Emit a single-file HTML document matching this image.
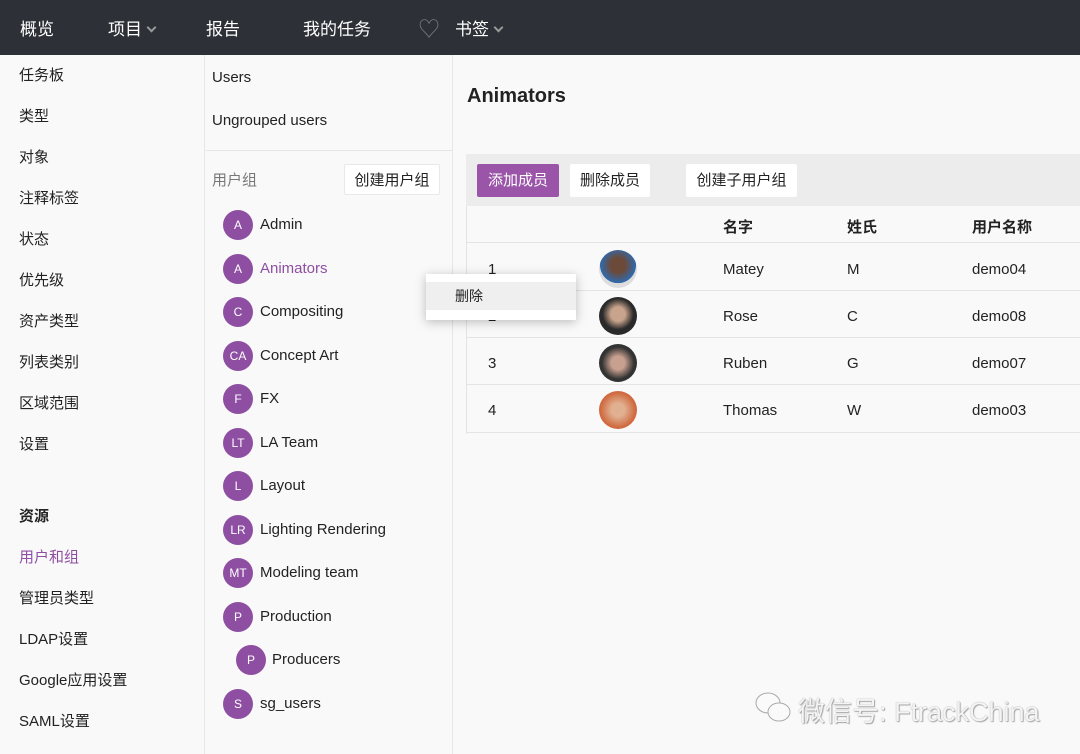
<!DOCTYPE html>
<html><head><meta charset="utf-8"><style>
*{margin:0;padding:0;box-sizing:border-box}
body{width:1080px;height:754px;overflow:hidden;background:#f9f9f9;font-family:"Liberation Sans","Noto Sans CJK SC",sans-serif;color:#222;position:relative}
.top{position:absolute;left:0;top:0;width:1080px;height:55px;background:#2d3036;color:#fff;font-size:17px}
.top span{position:absolute;top:15px}
.chev{display:inline-block;width:7px;height:7px;border-right:2px solid #999;border-bottom:2px solid #999;transform:rotate(45deg);margin-left:6px;position:relative;top:-4px}
.a{position:absolute;white-space:nowrap;font-size:15px}
.side{position:absolute;left:0;top:55px;width:205px;height:699px;border-right:1px solid #e6e6e6;background:#f9f9f9}
.mid{position:absolute;left:205px;top:55px;width:248px;height:699px;border-right:1px solid #e6e6e6;background:#f9f9f9}
.av{position:absolute;width:30px;height:30px;border-radius:50%;background:#8e4fa3;color:#fff;font-size:12px;text-align:center;line-height:30px}
.btn{position:absolute;height:33px;line-height:33px;text-align:center;font-size:15px;background:#fff;border-radius:2px}
.row{position:absolute;left:467px;width:613px;border-bottom:1px solid #e4e4e4}
.ph{position:absolute;width:38px;height:38px;border-radius:50%}
.g{margin-top:2px}
</style></head><body>
<div class="top">
<span style="left:20px">概览</span><span style="left:108px">项目<i class="chev"></i></span>
<span style="left:206px">报告</span><span style="left:303px">我的任务</span>
<span style="left:418px;color:#777;font-size:22px;top:12px">♡</span><span style="left:455px">书签<i class="chev"></i></span>
</div>
<div class="side"></div>
<div class="mid"></div>
<div style="position:absolute;left:206px;top:150px;width:246px;height:1px;background:#e6e6e6"></div>
<div class="a" style="left:19px;top:64px">任务板</div>
<div class="a" style="left:19px;top:105px">类型</div>
<div class="a" style="left:19px;top:146px">对象</div>
<div class="a" style="left:19px;top:187px">注释标签</div>
<div class="a" style="left:19px;top:228px">状态</div>
<div class="a" style="left:19px;top:269px">优先级</div>
<div class="a" style="left:19px;top:310px">资产类型</div>
<div class="a" style="left:19px;top:351px">列表类别</div>
<div class="a" style="left:19px;top:392px">区域范围</div>
<div class="a" style="left:19px;top:433px">设置</div>
<div class="a" style="left:19px;top:505px;font-weight:bold">资源</div>
<div class="a" style="left:19px;top:546px;color:#8e4fa3">用户和组</div>
<div class="a" style="left:19px;top:587px">管理员类型</div>
<div class="a" style="left:19px;top:628px">LDAP设置</div>
<div class="a" style="left:19px;top:669px">Google应用设置</div>
<div class="a" style="left:19px;top:710px">SAML设置</div>

<div class="a" style="left:212px;top:69px">Users</div>
<div class="a" style="left:212px;top:112px">Ungrouped users</div>
<div class="a" style="left:212px;top:169px;color:#777">用户组</div>
<div class="btn" style="left:344px;top:164px;width:96px;height:31px;line-height:31px;border:1px solid #e8e8e8">创建用户组</div>

<div class="av" style="left:223px;top:210px">A</div><div class="a" style="left:260px;top:216px">Admin</div>
<div class="av" style="left:223px;top:254px">A</div><div class="a" style="left:260px;top:260px;color:#8e4fa3">Animators</div>
<div class="av" style="left:223px;top:297px">C</div><div class="a" style="left:260px;top:303px">Compositing</div>
<div class="av" style="left:223px;top:341px">CA</div><div class="a" style="left:260px;top:347px">Concept Art</div>
<div class="av" style="left:223px;top:384px">F</div><div class="a" style="left:260px;top:390px">FX</div>
<div class="av" style="left:223px;top:428px">LT</div><div class="a" style="left:260px;top:434px">LA Team</div>
<div class="av" style="left:223px;top:471px">L</div><div class="a" style="left:260px;top:477px">Layout</div>
<div class="av" style="left:223px;top:515px">LR</div><div class="a" style="left:260px;top:521px">Lighting Rendering</div>
<div class="av" style="left:223px;top:558px">MT</div><div class="a" style="left:260px;top:564px">Modeling team</div>
<div class="av" style="left:223px;top:602px">P</div><div class="a" style="left:260px;top:608px">Production</div>
<div class="av" style="left:236px;top:645px">P</div><div class="a" style="left:272px;top:651px">Producers</div>
<div class="av" style="left:223px;top:689px">S</div><div class="a" style="left:260px;top:695px">sg_users</div>

<div class="a" style="left:467px;top:85px;font-size:20px;font-weight:bold">Animators</div>
<div style="position:absolute;left:466px;top:154px;width:614px;height:52px;background:#ececec"></div>
<div class="btn" style="left:477px;top:164px;width:82px;background:#9a55a8;color:#fff">添加成员</div>
<div class="btn" style="left:570px;top:164px;width:80px">删除成员</div>
<div class="btn" style="left:686px;top:164px;width:111px">创建子用户组</div>
<div style="position:absolute;left:466px;top:206px;width:1px;height:228px;background:#e4e4e4"></div>
<div class="row" style="top:206px;height:37px"></div>
<div class="a" style="left:723px;top:216px;font-weight:bold">名字</div>
<div class="a" style="left:847px;top:216px;font-weight:bold">姓氏</div>
<div class="a" style="left:972px;top:216px;font-weight:bold">用户名称</div>
<div class="row" style="top:243px;height:48px"></div>
<div class="row" style="top:291px;height:47px"></div>
<div class="row" style="top:338px;height:47px"></div>
<div class="row" style="top:385px;height:48px"></div>
<div class="ph" style="left:599px;top:250px;background:radial-gradient(circle at 50% 40%,#6b4a3a 25%,#2e6bb0 60%,#ddd 61%)"></div>
<div class="ph" style="left:599px;top:297px;background:radial-gradient(circle at 50% 45%,#c9a48c 25%,#2a2a2a 55%)"></div>
<div class="ph" style="left:599px;top:344px;background:radial-gradient(circle at 50% 50%,#c8a090 25%,#333 60%)"></div>
<div class="ph" style="left:599px;top:391px;background:radial-gradient(circle at 50% 50%,#e0b090 25%,#d06a40 65%)"></div>
<div class="a" style="left:488px;top:261px">1</div><div class="a" style="left:723px;top:261px">Matey</div><div class="a" style="left:847px;top:261px">M</div><div class="a" style="left:972px;top:261px">demo04</div>
<div class="a" style="left:488px;top:308px">2</div><div class="a" style="left:723px;top:308px">Rose</div><div class="a" style="left:847px;top:308px">C</div><div class="a" style="left:972px;top:308px">demo08</div>
<div class="a" style="left:488px;top:355px">3</div><div class="a" style="left:723px;top:355px">Ruben</div><div class="a" style="left:847px;top:355px">G</div><div class="a" style="left:972px;top:355px">demo07</div>
<div class="a" style="left:488px;top:402px">4</div><div class="a" style="left:723px;top:402px">Thomas</div><div class="a" style="left:847px;top:402px">W</div><div class="a" style="left:972px;top:402px">demo03</div>

<div style="position:absolute;left:426px;top:274px;width:150px;height:46px;background:#fff;box-shadow:0 2px 10px rgba(0,0,0,.25)">
<div style="margin-top:8px;height:28px;background:#efefef;font-size:14px;line-height:28px;padding-left:29px">删除</div></div>

<svg style="position:absolute;left:754px;top:690px" width="40" height="36" viewBox="0 0 40 36"><ellipse cx="14" cy="13" rx="12" ry="10" fill="#fafafa" stroke="#aaa"/><ellipse cx="25" cy="22" rx="11" ry="9" fill="#fafafa" stroke="#aaa"/></svg>
<div class="a" style="left:798px;top:690px;font-size:27px;color:#f4f4f4;text-shadow:0 0 1px #888,1px 1px 1px #aaa">微信号: FtrackChina</div>
</body></html>
